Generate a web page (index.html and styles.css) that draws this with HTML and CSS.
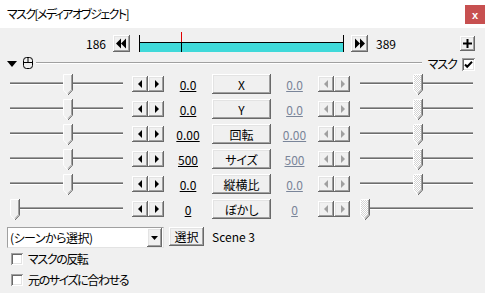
FILE: index.html
```html
<!DOCTYPE html>
<html lang="ja">
<head>
<meta charset="utf-8">
<link rel="stylesheet" href="styles.css">
</head>
<body>
<div class="titlebar">
  <span class="title">マスク[メディアオブジェクト]</span>
  <span class="close">x</span>
</div>

<div class="timeline">
  <span class="frame-start">186</span>
  <div class="bevel seek back"><svg width="17" height="17" viewBox="0 0 17 17"><path d="M3 8.5L8 3.5V13.5Z M8 8.5L13 3.5V13.5Z" fill="#000"/></svg></div>
  <div class="bar"><div class="bar-fill"></div><span class="cursor" style="left:41px"></span></div>
  <div class="bevel seek fwd"><svg width="17" height="17" viewBox="0 0 17 17"><path d="M4 3.5L9 8.5L4 13.5Z M9 3.5L14 8.5L9 13.5Z" fill="#000"/></svg></div>
  <span class="frame-end">389</span>
  <div class="bevel plus"><svg width="15" height="15" viewBox="0 0 15 15"><path d="M3 6.5H12V8.5H3Z M6.5 3H8.5V12H6.5Z" fill="#000"/></svg></div>
</div>

<div class="header">
  <svg class="collapse" width="10" height="6" viewBox="0 0 10 6"><path d="M0 0H10L5 6Z" fill="#000"/></svg>
  <svg class="mouse" width="10" height="12" viewBox="0 0 10 12"><rect x="0.5" y="0.5" width="9" height="11" rx="3" fill="none" stroke="#000"/><path d="M0.5 5.5H9.5 M5 0.5V5.5" stroke="#000" fill="none"/></svg>
  <span class="rule"></span>
  <span class="mask-label">マスク</span>
  <span class="check head-check"><svg width="13" height="13" viewBox="0 0 13 13"><path d="M3 6.5L5.2 8.8L10 3.8" fill="none" stroke="#000" stroke-width="2"/></svg></span>
</div>

<div class="params">
  <div class="prow">
    <div class="slider"><div class="track"></div><svg class="thumb" style="left:53px" width="10" height="22" viewBox="0 0 10 22"><path d="M0 0H10V16L5 21.5L0 16Z" fill="#f0f0f0"/><path d="M0.5 16V0.5H9" fill="none" stroke="#fff"/><path d="M9.5 0V16.2L5 21" fill="none" stroke="#696969"/><path d="M8.5 1V15.8L5 19.6" fill="none" stroke="#a0a0a0"/><path d="M0.5 16.2L5 21" fill="none" stroke="#fff"/></svg></div>
    <div class="spin"><span class="bevel sbtn"><svg width="16" height="16" viewBox="0 0 16 16"><path d="M6 8L10 4V12Z" fill="#000"/></svg></span><span class="bevel sbtn"><svg width="16" height="16" viewBox="0 0 16 16"><path d="M7 4L11 8L7 12Z" fill="#000"/></svg></span></div>
    <span class="val">0.0</span>
    <div class="bevel pbtn">X</div>
    <span class="val dim">0.0</span>
    <div class="spin off"><span class="bevel sbtn"><svg width="16" height="16" viewBox="0 0 16 16"><path d="M6 8L10 4V12Z" fill="#a0a0a0"/></svg></span><span class="bevel sbtn"><svg width="16" height="16" viewBox="0 0 16 16"><path d="M7 4L11 8L7 12Z" fill="#a0a0a0"/></svg></span></div>
    <div class="slider right"><div class="track"></div><svg class="thumb" style="left:53px" width="10" height="22" viewBox="0 0 10 22"><defs><pattern id="c1" width="2" height="2" patternUnits="userSpaceOnUse"><rect width="2" height="2" fill="#fff"/><rect width="1" height="1" fill="#d4d4d4"/><rect x="1" y="1" width="1" height="1" fill="#d4d4d4"/></pattern></defs><path d="M0 0H10V16L5 21.5L0 16Z" fill="url(#c1)"/><path d="M0.5 16V0.5H9" fill="none" stroke="#fff"/><path d="M9.5 0V16.2L5 21" fill="none" stroke="#696969"/><path d="M8.5 1V15.8L5 19.6" fill="none" stroke="#a0a0a0"/><path d="M0.5 16.2L5 21" fill="none" stroke="#fff"/></svg></div>
  </div>

  <div class="prow">
    <div class="slider"><div class="track"></div><svg class="thumb" style="left:53px" width="10" height="22" viewBox="0 0 10 22"><path d="M0 0H10V16L5 21.5L0 16Z" fill="#f0f0f0"/><path d="M0.5 16V0.5H9" fill="none" stroke="#fff"/><path d="M9.5 0V16.2L5 21" fill="none" stroke="#696969"/><path d="M8.5 1V15.8L5 19.6" fill="none" stroke="#a0a0a0"/><path d="M0.5 16.2L5 21" fill="none" stroke="#fff"/></svg></div>
    <div class="spin"><span class="bevel sbtn"><svg width="16" height="16" viewBox="0 0 16 16"><path d="M6 8L10 4V12Z" fill="#000"/></svg></span><span class="bevel sbtn"><svg width="16" height="16" viewBox="0 0 16 16"><path d="M7 4L11 8L7 12Z" fill="#000"/></svg></span></div>
    <span class="val">0.0</span>
    <div class="bevel pbtn">Y</div>
    <span class="val dim">0.0</span>
    <div class="spin off"><span class="bevel sbtn"><svg width="16" height="16" viewBox="0 0 16 16"><path d="M6 8L10 4V12Z" fill="#a0a0a0"/></svg></span><span class="bevel sbtn"><svg width="16" height="16" viewBox="0 0 16 16"><path d="M7 4L11 8L7 12Z" fill="#a0a0a0"/></svg></span></div>
    <div class="slider right"><div class="track"></div><svg class="thumb" style="left:53px" width="10" height="22" viewBox="0 0 10 22"><defs><pattern id="c2" width="2" height="2" patternUnits="userSpaceOnUse"><rect width="2" height="2" fill="#fff"/><rect width="1" height="1" fill="#d4d4d4"/><rect x="1" y="1" width="1" height="1" fill="#d4d4d4"/></pattern></defs><path d="M0 0H10V16L5 21.5L0 16Z" fill="url(#c2)"/><path d="M0.5 16V0.5H9" fill="none" stroke="#fff"/><path d="M9.5 0V16.2L5 21" fill="none" stroke="#696969"/><path d="M8.5 1V15.8L5 19.6" fill="none" stroke="#a0a0a0"/><path d="M0.5 16.2L5 21" fill="none" stroke="#fff"/></svg></div>
  </div>

  <div class="prow">
    <div class="slider"><div class="track"></div><svg class="thumb" style="left:53px" width="10" height="22" viewBox="0 0 10 22"><path d="M0 0H10V16L5 21.5L0 16Z" fill="#f0f0f0"/><path d="M0.5 16V0.5H9" fill="none" stroke="#fff"/><path d="M9.5 0V16.2L5 21" fill="none" stroke="#696969"/><path d="M8.5 1V15.8L5 19.6" fill="none" stroke="#a0a0a0"/><path d="M0.5 16.2L5 21" fill="none" stroke="#fff"/></svg></div>
    <div class="spin"><span class="bevel sbtn"><svg width="16" height="16" viewBox="0 0 16 16"><path d="M6 8L10 4V12Z" fill="#000"/></svg></span><span class="bevel sbtn"><svg width="16" height="16" viewBox="0 0 16 16"><path d="M7 4L11 8L7 12Z" fill="#000"/></svg></span></div>
    <span class="val">0.00</span>
    <div class="bevel pbtn">回転</div>
    <span class="val dim">0.00</span>
    <div class="spin off"><span class="bevel sbtn"><svg width="16" height="16" viewBox="0 0 16 16"><path d="M6 8L10 4V12Z" fill="#a0a0a0"/></svg></span><span class="bevel sbtn"><svg width="16" height="16" viewBox="0 0 16 16"><path d="M7 4L11 8L7 12Z" fill="#a0a0a0"/></svg></span></div>
    <div class="slider right"><div class="track"></div><svg class="thumb" style="left:53px" width="10" height="22" viewBox="0 0 10 22"><defs><pattern id="c3" width="2" height="2" patternUnits="userSpaceOnUse"><rect width="2" height="2" fill="#fff"/><rect width="1" height="1" fill="#d4d4d4"/><rect x="1" y="1" width="1" height="1" fill="#d4d4d4"/></pattern></defs><path d="M0 0H10V16L5 21.5L0 16Z" fill="url(#c3)"/><path d="M0.5 16V0.5H9" fill="none" stroke="#fff"/><path d="M9.5 0V16.2L5 21" fill="none" stroke="#696969"/><path d="M8.5 1V15.8L5 19.6" fill="none" stroke="#a0a0a0"/><path d="M0.5 16.2L5 21" fill="none" stroke="#fff"/></svg></div>
  </div>

  <div class="prow">
    <div class="slider"><div class="track"></div><svg class="thumb" style="left:53px" width="10" height="22" viewBox="0 0 10 22"><path d="M0 0H10V16L5 21.5L0 16Z" fill="#f0f0f0"/><path d="M0.5 16V0.5H9" fill="none" stroke="#fff"/><path d="M9.5 0V16.2L5 21" fill="none" stroke="#696969"/><path d="M8.5 1V15.8L5 19.6" fill="none" stroke="#a0a0a0"/><path d="M0.5 16.2L5 21" fill="none" stroke="#fff"/></svg></div>
    <div class="spin"><span class="bevel sbtn"><svg width="16" height="16" viewBox="0 0 16 16"><path d="M6 8L10 4V12Z" fill="#000"/></svg></span><span class="bevel sbtn"><svg width="16" height="16" viewBox="0 0 16 16"><path d="M7 4L11 8L7 12Z" fill="#000"/></svg></span></div>
    <span class="val">500</span>
    <div class="bevel pbtn">サイズ</div>
    <span class="val dim">500</span>
    <div class="spin off"><span class="bevel sbtn"><svg width="16" height="16" viewBox="0 0 16 16"><path d="M6 8L10 4V12Z" fill="#a0a0a0"/></svg></span><span class="bevel sbtn"><svg width="16" height="16" viewBox="0 0 16 16"><path d="M7 4L11 8L7 12Z" fill="#a0a0a0"/></svg></span></div>
    <div class="slider right"><div class="track"></div><svg class="thumb" style="left:53px" width="10" height="22" viewBox="0 0 10 22"><defs><pattern id="c4" width="2" height="2" patternUnits="userSpaceOnUse"><rect width="2" height="2" fill="#fff"/><rect width="1" height="1" fill="#d4d4d4"/><rect x="1" y="1" width="1" height="1" fill="#d4d4d4"/></pattern></defs><path d="M0 0H10V16L5 21.5L0 16Z" fill="url(#c4)"/><path d="M0.5 16V0.5H9" fill="none" stroke="#fff"/><path d="M9.5 0V16.2L5 21" fill="none" stroke="#696969"/><path d="M8.5 1V15.8L5 19.6" fill="none" stroke="#a0a0a0"/><path d="M0.5 16.2L5 21" fill="none" stroke="#fff"/></svg></div>
  </div>

  <div class="prow">
    <div class="slider"><div class="track"></div><svg class="thumb" style="left:53px" width="10" height="22" viewBox="0 0 10 22"><path d="M0 0H10V16L5 21.5L0 16Z" fill="#f0f0f0"/><path d="M0.5 16V0.5H9" fill="none" stroke="#fff"/><path d="M9.5 0V16.2L5 21" fill="none" stroke="#696969"/><path d="M8.5 1V15.8L5 19.6" fill="none" stroke="#a0a0a0"/><path d="M0.5 16.2L5 21" fill="none" stroke="#fff"/></svg></div>
    <div class="spin"><span class="bevel sbtn"><svg width="16" height="16" viewBox="0 0 16 16"><path d="M6 8L10 4V12Z" fill="#000"/></svg></span><span class="bevel sbtn"><svg width="16" height="16" viewBox="0 0 16 16"><path d="M7 4L11 8L7 12Z" fill="#000"/></svg></span></div>
    <span class="val">0.0</span>
    <div class="bevel pbtn">縦横比</div>
    <span class="val dim">0.0</span>
    <div class="spin off"><span class="bevel sbtn"><svg width="16" height="16" viewBox="0 0 16 16"><path d="M6 8L10 4V12Z" fill="#a0a0a0"/></svg></span><span class="bevel sbtn"><svg width="16" height="16" viewBox="0 0 16 16"><path d="M7 4L11 8L7 12Z" fill="#a0a0a0"/></svg></span></div>
    <div class="slider right"><div class="track"></div><svg class="thumb" style="left:53px" width="10" height="22" viewBox="0 0 10 22"><defs><pattern id="c5" width="2" height="2" patternUnits="userSpaceOnUse"><rect width="2" height="2" fill="#fff"/><rect width="1" height="1" fill="#d4d4d4"/><rect x="1" y="1" width="1" height="1" fill="#d4d4d4"/></pattern></defs><path d="M0 0H10V16L5 21.5L0 16Z" fill="url(#c5)"/><path d="M0.5 16V0.5H9" fill="none" stroke="#fff"/><path d="M9.5 0V16.2L5 21" fill="none" stroke="#696969"/><path d="M8.5 1V15.8L5 19.6" fill="none" stroke="#a0a0a0"/><path d="M0.5 16.2L5 21" fill="none" stroke="#fff"/></svg></div>
  </div>

  <div class="prow">
    <div class="slider"><div class="track"></div><svg class="thumb" style="left:0px" width="10" height="22" viewBox="0 0 10 22"><path d="M0 0H10V16L5 21.5L0 16Z" fill="#f0f0f0"/><path d="M0.5 16V0.5H9" fill="none" stroke="#fff"/><path d="M9.5 0V16.2L5 21" fill="none" stroke="#696969"/><path d="M8.5 1V15.8L5 19.6" fill="none" stroke="#a0a0a0"/><path d="M0.5 16.2L5 21" fill="none" stroke="#fff"/></svg></div>
    <div class="spin"><span class="bevel sbtn"><svg width="16" height="16" viewBox="0 0 16 16"><path d="M6 8L10 4V12Z" fill="#000"/></svg></span><span class="bevel sbtn"><svg width="16" height="16" viewBox="0 0 16 16"><path d="M7 4L11 8L7 12Z" fill="#000"/></svg></span></div>
    <span class="val">0</span>
    <div class="bevel pbtn">ぼかし</div>
    <span class="val dim">0</span>
    <div class="spin off"><span class="bevel sbtn"><svg width="16" height="16" viewBox="0 0 16 16"><path d="M6 8L10 4V12Z" fill="#a0a0a0"/></svg></span><span class="bevel sbtn"><svg width="16" height="16" viewBox="0 0 16 16"><path d="M7 4L11 8L7 12Z" fill="#a0a0a0"/></svg></span></div>
    <div class="slider right"><div class="track"></div><svg class="thumb" style="left:0px" width="10" height="22" viewBox="0 0 10 22"><defs><pattern id="c6" width="2" height="2" patternUnits="userSpaceOnUse"><rect width="2" height="2" fill="#fff"/><rect width="1" height="1" fill="#d4d4d4"/><rect x="1" y="1" width="1" height="1" fill="#d4d4d4"/></pattern></defs><path d="M0 0H10V16L5 21.5L0 16Z" fill="url(#c6)"/><path d="M0.5 16V0.5H9" fill="none" stroke="#fff"/><path d="M9.5 0V16.2L5 21" fill="none" stroke="#696969"/><path d="M8.5 1V15.8L5 19.6" fill="none" stroke="#a0a0a0"/><path d="M0.5 16.2L5 21" fill="none" stroke="#fff"/></svg></div>
  </div>
</div>

<div class="scene-row">
  <div class="dropdown">
    <span class="dd-text">(シーンから選択)</span>
    <span class="bevel dd-btn"><svg width="15" height="19" viewBox="0 0 15 19"><path d="M4 8H11L7.5 12Z" fill="#000"/></svg></span>
  </div>
  <div class="bevel select-btn">選択</div>
  <span class="scene-name">Scene 3</span>
</div>

<div class="option"><span class="check"></span><span class="opt-label">マスクの反転</span></div>
<div class="option"><span class="check"></span><span class="opt-label">元のサイズに合わせる</span></div>
</body>
</html>
```
FILE: styles.css
```css
* { box-sizing: border-box; }
html, body { margin: 0; padding: 0; }
body {
  width: 485px;
  height: 293px;
  overflow: hidden;
  background: #f0f0f0;
  color: #000;
  font-family: "Noto Sans CJK JP", sans-serif;
  font-size: 12px;
  font-feature-settings: "palt";
}
svg { display: block; }

.titlebar {
  height: 28px;
  background: #fff;
  display: flex;
  align-items: flex-start;
}
.title { padding-left: 7px; line-height: 28px; letter-spacing: -1.6px; }
.close {
  margin-left: auto;
  margin-top: 5px;
  width: 20px;
  height: 19px;
  background: #c75050;
  color: #fff;
  font: bold 11px "Liberation Sans", sans-serif;
  display: flex;
  align-items: center;
  justify-content: center;
}

.bevel {
  background: #f0f0f0;
  box-shadow: inset -1px -1px #696969, inset 1px 1px #fff, inset -2px -2px #a0a0a0, inset 2px 2px #e3e3e3;
}

.timeline {
  display: flex;
  align-items: center;
  height: 17px;
  margin-top: 7px;
}
.frame-start { width: 106px; text-align: right; }
.seek { width: 17px; height: 17px; flex: none; margin-left: 7px; }
.bar {
  position: relative;
  width: 205px;
  height: 17px;
  margin-left: 9px;
  border-left: 1px solid #000;
  border-right: 1px solid #000;
}
.bar-fill {
  margin-top: 7px;
  height: 10px;
  border-top: 1px solid #000;
  background: #3fd9d9;
}
.cursor {
  position: absolute;
  top: -3px;
  width: 1px;
  height: 20px;
  background: linear-gradient(#e00000 10px, #000 10px);
}
.frame-end { margin-left: 8px; }
.plus { margin-left: auto; margin-right: 10px; width: 15px; height: 15px; }

.header {
  display: flex;
  align-items: flex-start;
  height: 15px;
  margin-top: 5px;
}
.collapse { margin-left: 7px; margin-top: 4px; }
.mouse { margin-left: 6px; }
.rule {
  flex: 1;
  margin: 5px 6px 0 3px;
  height: 2px;
  border-top: 1px solid #a0a0a0;
  border-bottom: 1px solid #fff;
}
.mask-label { line-height: 13px; letter-spacing: -1px; }
.check {
  width: 12px;
  height: 12px;
  flex: none;
  background: #fff;
  box-shadow: inset 1px 1px #a0a0a0, inset -1px -1px #fff, inset 2px 2px #696969, inset -2px -2px #e3e3e3;
}
.head-check { width: 13px; height: 13px; margin-left: 5px; margin-top: 1px; margin-right: 10px; }

.params { display: flex; flex-direction: column; }
.prow {
  display: flex;
  align-items: flex-start;
  height: 25px;
  padding-left: 10px;
}
.slider { position: relative; width: 113px; height: 25px; flex: none; }
.slider.right { margin-left: 10px; }
.track {
  margin-top: 10px;
  height: 3px;
  border-top: 1px solid #a0a0a0;
  border-bottom: 1px solid #fff;
  background: #6d6d6d;
}
.thumb { position: absolute; top: 2px; }
.spin { display: flex; margin-top: 4px; flex: none; }
.prow > .spin:nth-child(2) { margin-left: 9px; }
.sbtn { width: 16px; height: 16px; }
.val {
  width: 48px;
  text-align: center;
  line-height: 25px;
  text-decoration: underline;
  flex: none;
}
.val.dim { width: 47px; color: #7a8599; }
.pbtn {
  width: 59px;
  height: 20px;
  margin-top: 2px;
  display: flex;
  align-items: center;
  justify-content: center;
  flex: none;
}

.scene-row {
  display: flex;
  align-items: flex-start;
  margin-top: 5px;
  padding-left: 7px;
  height: 21px;
}
.dropdown {
  width: 157px;
  height: 21px;
  background: #fff;
  border: 1px solid #a0a0a0;
  border-right-color: #e3e3e3;
  border-bottom-color: #e3e3e3;
  display: flex;
  align-items: center;
  padding: 0 1px 0 2px;
}
.dd-text { flex: 1; letter-spacing: -0.5px; }
.dd-btn { width: 15px; height: 19px; }
.select-btn {
  width: 35px;
  height: 19px;
  margin-left: 5px;
  display: flex;
  align-items: center;
  justify-content: center;
}
.scene-name { margin-left: 8px; line-height: 19px; }

.option {
  display: flex;
  align-items: center;
  height: 21px;
  padding-left: 11px;
}
.option .check { margin-right: 5px; }
.opt-label { letter-spacing: -1.4px; }
```
